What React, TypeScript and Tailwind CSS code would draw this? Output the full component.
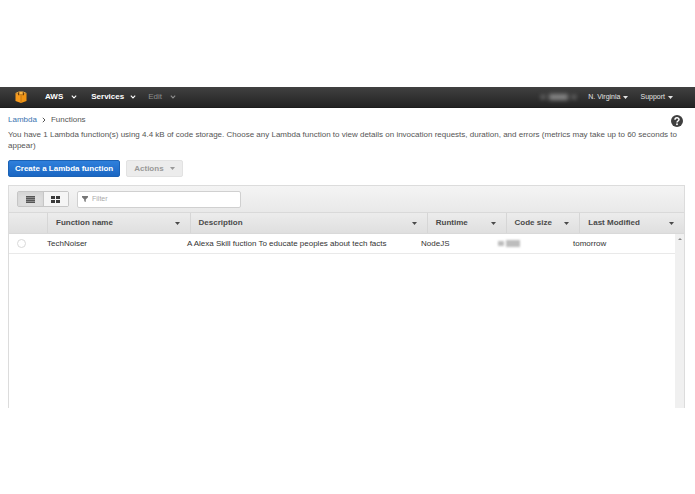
import React from "react";

function Chevron({ className = "" }: { className?: string }) {
  return (
    <svg viewBox="0 0 6 4" className={`h-1 w-1.5 ${className}`} fill="none" stroke="currentColor" strokeWidth="1.1" aria-hidden="true">
      <path d="M0.8 0.7 3 2.9 5.2 0.7" />
    </svg>
  );
}

function Caret({ className = "h-[3px] w-[5px]" }: { className?: string }) {
  return (
    <svg viewBox="0 0 6 3" preserveAspectRatio="none" className={`shrink-0 ${className}`} fill="currentColor" aria-hidden="true">
      <path d="M0 0h6L3 3z" />
    </svg>
  );
}

function Cube() {
  return (
    <svg viewBox="0 0 24 24" className="h-3 w-3" aria-hidden="true">
      <path d="M1 4 12 7v17L1 20z" fill="#f79a1c" />
      <path d="M23 4 12 7v17l11-4z" fill="#f09414" />
      <path d="M1 4 8 1h8l7 3-11 3z" fill="#fdb643" />
      <path d="M6 3l2.500-1v7L6 8zM18 3l-2.500-1v7L18 8z" fill="#6b3f0c" />
      <path d="M12 7v16" stroke="#a8640f" strokeWidth="1.2" />
    </svg>
  );
}

function Nav() {
  return (
    <nav className="flex h-[21px] items-center border-b border-[#1c1c1c] bg-linear-to-b from-[#414141] to-[#232323] pr-[22px] pl-[15px] text-[7px] text-[#e4e4e4]">
      <a href="#home" aria-label="Console home">
        <Cube />
      </a>
      <button className="ml-[18px] flex items-center gap-2 text-[8px] font-bold text-white">
        AWS <Chevron />
      </button>
      <button className="ml-3.5 flex items-center gap-1.5 text-[8px] font-bold text-white">
        Services <Chevron />
      </button>
      <button className="ml-3 flex items-center gap-2 text-[8px] text-[#8e8e8e]">
        Edit <Chevron />
      </button>
      <div className="ml-auto flex items-center gap-3">
        <button aria-label="Account" className="flex h-2 w-[35px] items-center gap-1 blur-[2px]">
          <span className="h-1 w-1 bg-[#777777]" />
          <span className="h-1.5 w-5 bg-[#888888]" />
          <span className="h-1 w-1 bg-[#777777]" />
        </button>
        <button className="flex items-center gap-[3px]">
          N. Virginia <Caret />
        </button>
        <button className="flex items-center gap-[3px]">
          Support <Caret />
        </button>
      </div>
    </nav>
  );
}

function ViewToggle() {
  return (
    <div className="flex h-4 w-[52px] rounded-xs border border-[#c6c6c6]">
      <button aria-label="List view" aria-pressed="true" className="flex flex-1 items-center justify-center border-r border-[#c6c6c6] bg-[#dedede] shadow-inner">
        <svg viewBox="0 0 9 7" className="h-[7px] w-[9px]" aria-hidden="true">
          <path d="M0 0h9v7H0z" fill="#8a8a8a" />
          <path d="M0 0h9v1H0zM0 2h9v1H0zM0 4h9v1H0zM0 6h9v1H0z" fill="#555555" />
        </svg>
      </button>
      <button aria-label="Grid view" className="flex flex-1 items-center justify-center bg-[#f5f5f5]">
        <svg viewBox="0 0 9 7" className="h-[7px] w-[9px]" fill="#3a3a3a" aria-hidden="true">
          <path d="M0 0h4v3H0zM5 0h4v3H5zM0 4h4v3H0zM5 4h4v3H5z" />
        </svg>
      </button>
    </div>
  );
}

const columns = ["Function name", "Description", "Runtime", "Code size", "Last Modified"];

function FunctionTable() {
  return (
    <table className="flex flex-1 flex-col text-[8px]">
      <thead className="block">
        <tr className="grid h-[22px] grid-cols-[38px_143fr_238fr_79fr_74fr_105fr] border-y border-[#d9d9d9] bg-linear-to-b from-[#ececec] to-[#dfdfdf] text-[#4a4a4a]">
          <th aria-label="Select" />
          {columns.map((name) => (
            <th key={name} scope="col" className="flex min-w-0 items-center justify-between border-l border-[#d6d6d6] pr-2.5 pl-2 text-left font-bold whitespace-nowrap">
              {name}
              <Caret />
            </th>
          ))}
        </tr>
      </thead>
      <tbody className="block flex-1 pr-[9px]">
        <tr className="grid h-5 grid-cols-[38px_140fr_234fr_77fr_75fr_102fr] items-center border-b border-[#e9e9e9] text-[#333333]">
          <td className="flex pl-2">
            <input type="radio" name="function" aria-label="TechNoiser" className="h-[9px] w-[9px] appearance-none rounded-full border border-[#d9d9d9] bg-white" />
          </td>
          <td>TechNoiser</td>
          <td>A Alexa Skill fuction To educate peoples about tech facts</td>
          <td>NodeJS</td>
          <td>
            <span className="flex items-center gap-0.5 blur-[1px]">
              <span className="h-[5px] w-1.5 bg-[#bdbdbd]" />
              <span className="h-[7px] w-3.5 bg-[#bdbdbd]" />
            </span>
          </td>
          <td>tomorrow</td>
        </tr>
      </tbody>
    </table>
  );
}

export default function App() {
  return (
    <div className="min-h-screen bg-white pt-[87px] pb-[86px] font-['Liberation_Sans',Arial,sans-serif] text-[8px] text-[#555555]">
      <Nav />
      <main className="pr-2.5 pl-2">
        <div className="flex items-center gap-[5px] pt-[5px]">
          <a href="#lambda" className="text-[#3b73af]">Lambda</a>
          <svg viewBox="0 0 4 6" className="h-1.5 w-1" fill="none" stroke="#555555" aria-hidden="true">
            <path d="M.8.8 3 3 .8 5.2" />
          </svg>
          <span>Functions</span>
          <button aria-label="Help" className="mt-0.5 mr-0.5 ml-auto h-3 w-3">
            <svg viewBox="0 0 24 24" className="h-3 w-3" aria-hidden="true">
              <circle cx="12" cy="12" r="12" fill="#3f3f3f" />
              <path d="M8 9.5c0-5 8-5 8-.5 0 3-4 3-4 6" fill="none" stroke="#ffffff" strokeWidth="3" />
              <circle cx="12" cy="18.5" r="1.9" fill="#ffffff" />
            </svg>
          </button>
        </div>
        <p className="mt-0.5 leading-[11px]">
          You have 1 Lambda function(s) using 4.4 kB of code storage. Choose any Lambda function to view details on invocation requests, duration, and errors (metrics may take up to 60 seconds to appear)
        </p>

        <div className="mt-[9px] flex gap-1.5">
          <button className="h-[17px] rounded-xs border border-[#1b62b5] bg-linear-to-b from-[#2f80dc] to-[#1a66c2] px-1.5 text-[8px] font-bold text-white">
            Create a Lambda function
          </button>
          <button className="flex h-[17px] items-center gap-1.5 rounded-xs border border-[#e2e2e2] bg-[#ececec] px-[7px] text-[8px] font-bold text-[#999999]">
            Actions <Caret />
          </button>
        </div>

        <section className="mt-2 flex h-[223px] flex-col border-x border-t border-[#dcdcdc]">
          <div className="flex h-[26px] items-center gap-2 bg-linear-to-b from-[#f4f4f4] to-[#e9e9e9] pl-2">
            <ViewToggle />
            <label className="flex h-[17px] w-[164px] items-center gap-1 rounded-xs border border-[#d0d0d0] bg-white px-1">
              <svg viewBox="0 0 8 8" className="h-1.5 w-1.5" fill="#777777" aria-hidden="true">
                <path d="M0 0h8v1.5L5 4.5V8L3 7V4.5L0 1.5z" />
              </svg>
              <input type="text" placeholder="Filter" aria-label="Filter" className="min-w-0 flex-1 text-[7px] outline-none placeholder:text-[#aaaaaa]" />
            </label>
          </div>
          <div className="relative flex flex-1">
            <FunctionTable />
            <div className="absolute top-[22px] right-0 bottom-0 flex w-[9px] justify-center bg-[#f0f0f0] pt-1 text-[#888888]">
              <Caret className="h-0.5 w-1 rotate-180" />
            </div>
          </div>
        </section>
      </main>
    </div>
  );
}
